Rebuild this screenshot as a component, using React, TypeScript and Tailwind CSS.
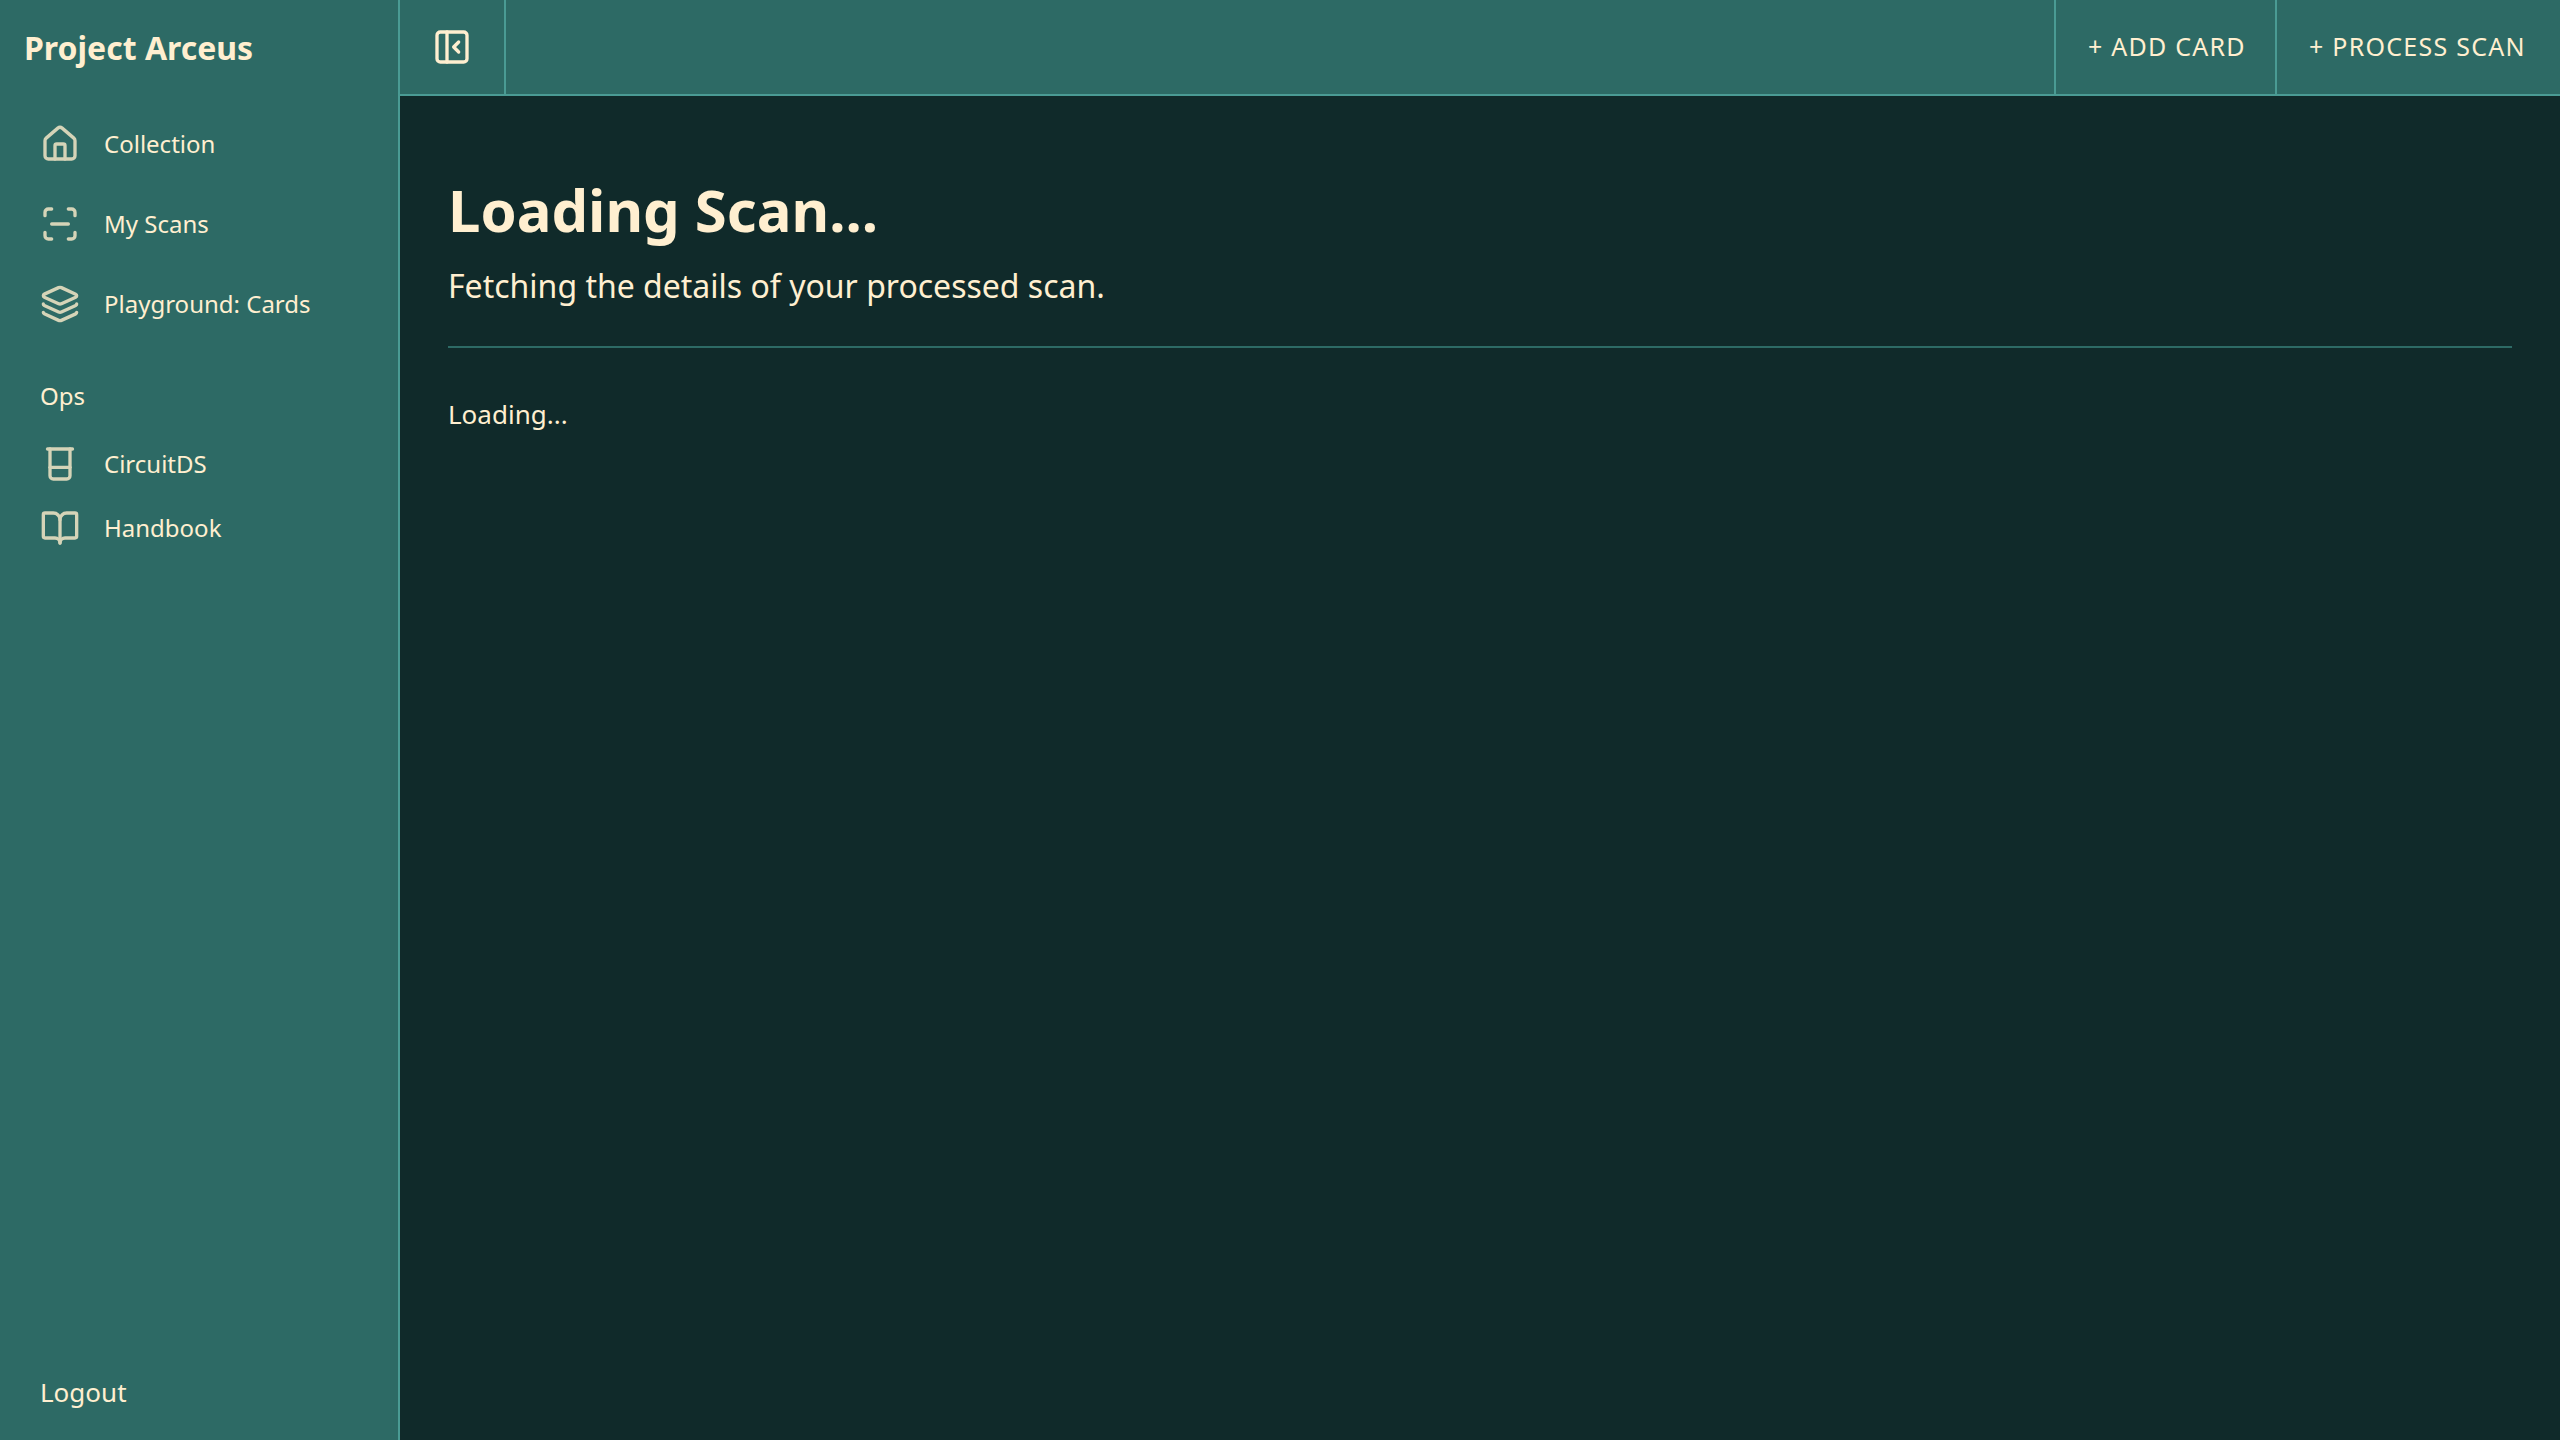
import type { LucideIcon } from "lucide-react";
import { Beaker, BookOpen, House, Layers, PanelLeftClose } from "lucide-react";
import type { ComponentType, SVGProps } from "react";

function ScanIcon(props: SVGProps<SVGSVGElement>) {
  return (
    <svg
      viewBox="0 0 24 24"
      fill="none"
      stroke="currentColor"
      strokeWidth="2"
      strokeLinecap="round"
      strokeLinejoin="round"
      {...props}
    >
      <path d="M3 7V5a2 2 0 0 1 2-2h2" />
      <path d="M17 3h2a2 2 0 0 1 2 2v2" />
      <path d="M21 17v2a2 2 0 0 1-2 2h-2" />
      <path d="M7 21H5a2 2 0 0 1-2-2v-2" />
      <path d="M7 12h10" />
    </svg>
  );
}

type NavEntry = {
  label: string;
  Icon: LucideIcon | ComponentType<SVGProps<SVGSVGElement>>;
};

const mainNav: NavEntry[] = [
  { label: "Collection", Icon: House },
  { label: "My Scans", Icon: ScanIcon },
  { label: "Playground: Cards", Icon: Layers },
];

const opsNav: NavEntry[] = [
  { label: "CircuitDS", Icon: Beaker },
  { label: "Handbook", Icon: BookOpen },
];

function NavLink({ label, Icon, compact = false }: NavEntry & { compact?: boolean }) {
  return (
    <li>
      <a href="#" className={`flex items-center gap-6 px-10 ${compact ? "h-16" : "h-20"}`}>
        <Icon className="size-10 shrink-0 text-[#d5d4b8]" aria-hidden="true" />
        <span>{label}</span>
      </a>
    </li>
  );
}

function Sidebar() {
  return (
    <aside className="flex w-[400px] shrink-0 flex-col border-r-2 border-[#4a9b94] bg-[#2d6a65]">
      <a href="#" className="flex h-24 items-center px-6 text-[32px] font-bold">
        Project Arceus
      </a>
      <nav className="flex-1 pt-2">
        <ul>
          {mainNav.map((entry) => (
            <NavLink key={entry.label} {...entry} />
          ))}
        </ul>
        <h2 className="mt-4 flex h-18 items-center px-10">Ops</h2>
        <ul>
          {opsNav.map((entry) => (
            <NavLink key={entry.label} {...entry} compact />
          ))}
        </ul>
      </nav>
      <button type="button" className="mb-4 flex h-16 items-center px-10 text-[26px]">
        Logout
      </button>
    </aside>
  );
}

function TopBar() {
  return (
    <header className="flex h-24 border-b-2 border-[#4a9b94] bg-[#2d6a65]">
      <button
        type="button"
        aria-label="Collapse sidebar"
        className="flex items-center border-r-2 border-[#4a9b94] px-8"
      >
        <PanelLeftClose className="size-10" aria-hidden="true" />
      </button>
      <div className="ml-auto flex text-[25px]">
        <button
          type="button"
          className="min-w-[221px] border-l-2 border-[#4a9b94] pr-7 pl-8 text-left tracking-wider uppercase"
        >
          + Add Card
        </button>
        <button
          type="button"
          className="min-w-[285px] border-l-2 border-[#4a9b94] pr-7 pl-8 text-left tracking-wider uppercase"
        >
          + Process Scan
        </button>
      </div>
    </header>
  );
}

export default function App() {
  return (
    <div className="flex min-h-screen bg-[#102a2a] font-['Noto_Sans',sans-serif] text-2xl text-[#ffefd0]">
      <Sidebar />
      <div className="min-w-0 flex-1">
        <TopBar />
        <main className="px-12 pt-18">
          <div className="border-b-2 border-[#2d6a65] pb-9">
            <h1 className="text-[58px] leading-[84px] font-bold">Loading Scan...</h1>
            <p className="mt-2.5 text-[32px] leading-[48px]">
              Fetching the details of your processed scan.
            </p>
          </div>
          <p className="mt-12 text-[26px] leading-9">Loading...</p>
        </main>
      </div>
    </div>
  );
}
